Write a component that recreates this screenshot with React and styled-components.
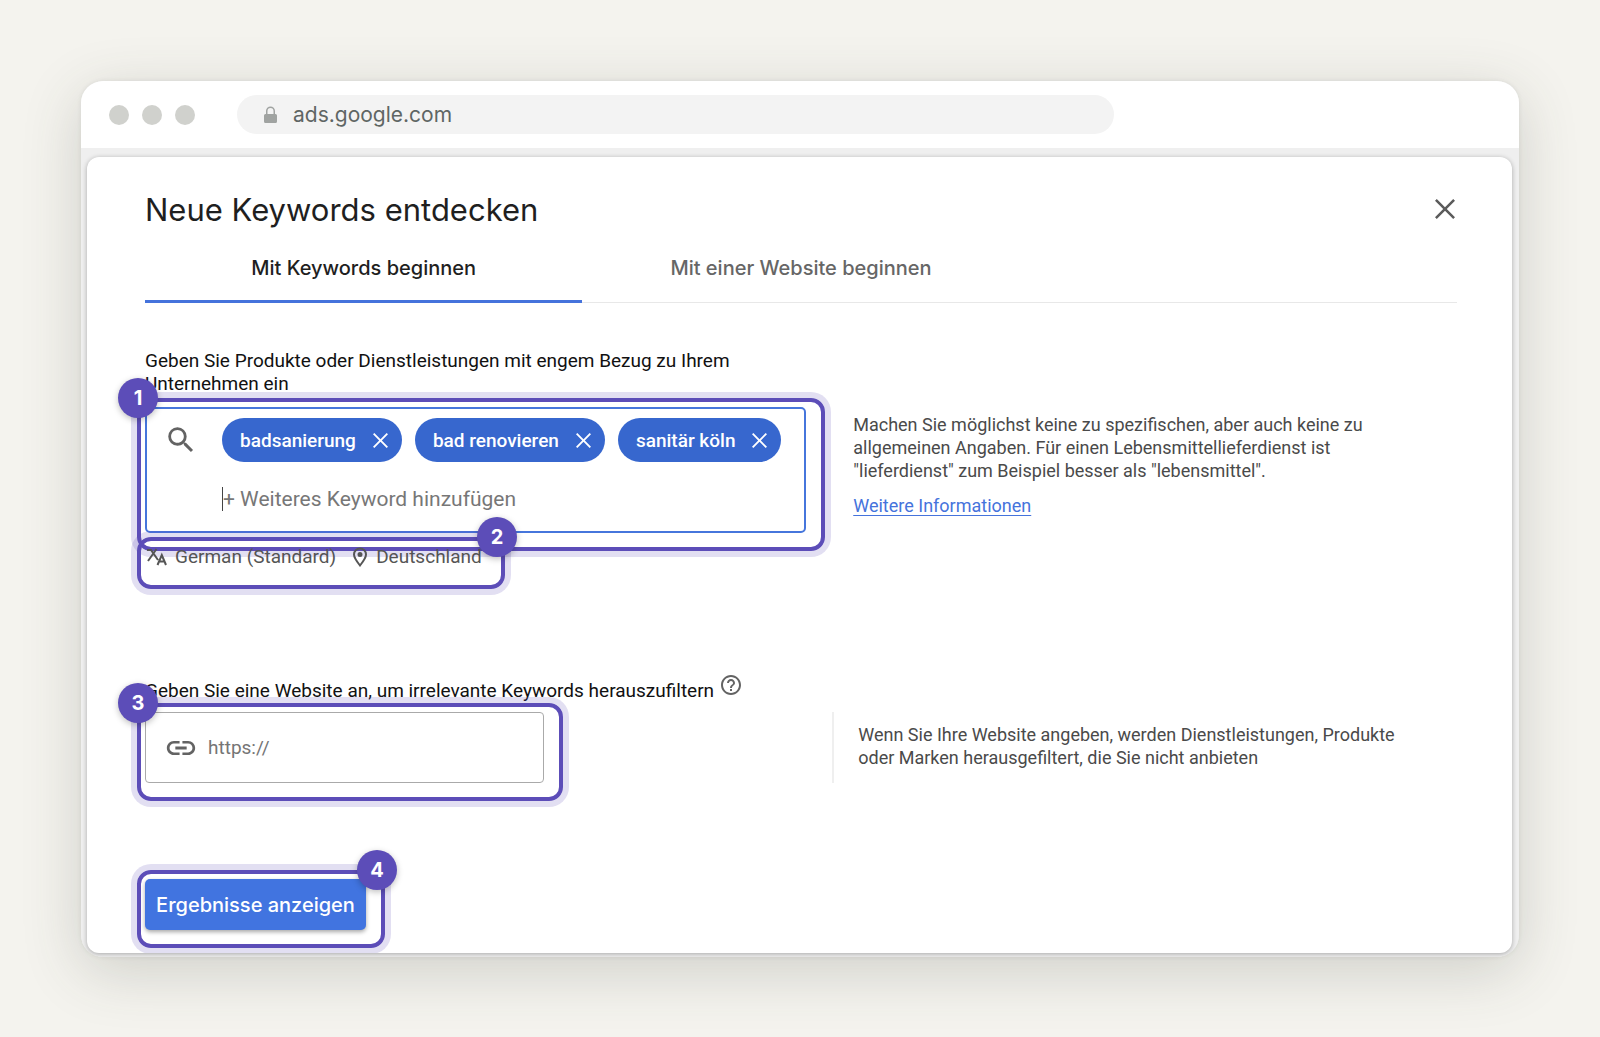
import React from "react";
import styled, { createGlobalStyle, css } from "styled-components";

const GlobalStyle = createGlobalStyle`
  * {
    box-sizing: border-box;
  }

  body {
    margin: 0;
    background: #f4f3ee;
    font-family: Roboto, "Liberation Sans", sans-serif;
    color: #1f1f1f;
  }
`;

const Page = styled.main`
  padding: 81px;
`;

const Browser = styled.div`
  overflow: hidden;
  border-radius: 22px;
  background: #ececec;
  box-shadow: 0 0 4px rgba(60, 65, 55, 0.1), 0 14px 60px rgba(60, 65, 55, 0.2);
`;

const Toolbar = styled.header`
  display: flex;
  align-items: center;
  height: 67px;
  padding: 0 28px;
  background: #fff;
`;

const Dots = styled.div`
  display: flex;
  gap: 13px;
  margin-right: 42px;
`;

const Dot = styled.span`
  width: 20px;
  height: 20px;
  border-radius: 50%;
  background: #d0d1cd;
`;

const AddressBar = styled.div`
  display: flex;
  align-items: center;
  gap: 15px;
  flex: 0 1 877px;
  height: 39px;
  padding: 0 26px;
  border-radius: 20px;
  background: #f3f3f3;
  color: #5f6664;
  font-family: Inter, "Liberation Sans", sans-serif;
  font-size: 21px;

  svg {
    fill: #a0a3a1;
  }
`;

const Viewport = styled.div`
  padding: 9px 7px 4px 6px;
  background: #efefef;
`;

const Dialog = styled.section`
  overflow: hidden;
  padding: 31px 55px 23px 58px;
  border-radius: 12px;
  background: #fff;
  box-shadow: 0 1px 5px rgba(0, 0, 0, 0.3);
`;

const DialogHeader = styled.div`
  display: flex;
  align-items: center;
  justify-content: space-between;
  height: 42px;
  margin-bottom: 8px;
  padding-right: 2px;
`;

const Title = styled.h1`
  margin: 0;
  font-family: Inter, sans-serif;
  font-size: 31px;
  font-weight: 400;
`;

const IconButton = styled.button`
  display: flex;
  padding: 0;
  border: 0;
  background: none;
  color: ${({ $color }) => $color || "inherit"};
  cursor: pointer;
`;

const Tabs = styled.div`
  display: grid;
  grid-template-columns: repeat(3, 1fr);
  border-bottom: 1px solid #e8e8e8;
`;

const Tab = styled.button`
  height: 65px;
  margin-bottom: -1px;
  padding: 0 0 3px;
  border: 0;
  border-bottom: 3px solid ${({ $active }) => ($active ? "#4573dc" : "transparent")};
  background: none;
  color: ${({ $active }) => ($active ? "#1f1f1f" : "#666")};
  font-family: Inter, sans-serif;
  font-size: 20px;
  font-weight: 500;
`;

const Row = styled.div`
  display: grid;
  grid-template-columns: 11fr 10fr;
  margin-top: ${({ $top }) => $top}px;
`;

const Column = styled.div`
  min-width: 0;
  padding-right: 26px;
`;

const Label = styled.label`
  display: block;
  color: #111;
  font-size: 19px;
  line-height: 23px;
`;

const LabelRow = styled.div`
  display: flex;
  align-items: flex-start;
  gap: 5px;

  ${Label} {
    margin-top: 6px;
  }
`;

const Marked = styled.div`
  position: relative;
  width: ${({ $width }) => $width || "auto"};
  margin-top: ${({ $top }) => $top || 0}px;
`;

const Frame = styled.div`
  position: absolute;
  inset: -9px -19px -18px -8px;
  border: 4px solid #5c4db8;
  border-radius: 14px;
  box-shadow: 0 0 0 6px rgba(92, 77, 184, 0.18);
  pointer-events: none;
`;

const Badge = styled.span`
  position: absolute;
  z-index: 1;
  top: -29px;
  ${({ $right }) =>
    $right
      ? css`
          right: -31px;
        `
      : css`
          left: -27px;
        `}
  width: 40px;
  height: 40px;
  border-radius: 50%;
  background: #5c4db8;
  box-shadow: 0 2px 6px rgba(0, 0, 0, 0.25);
  color: #fff;
  font-family: Inter, sans-serif;
  font-size: 20px;
  font-weight: 700;
  line-height: 40px;
  text-align: center;
`;

const KeywordField = styled.div`
  display: flex;
  min-height: 126px;
  padding: 9px 16px 9px 17px;
  border: 2px solid #4676dc;
  border-radius: 5px;

  > svg {
    flex: none;
    margin-top: 5px;
    fill: #636363;
  }
`;

const KeywordArea = styled.div`
  margin-left: 24px;
`;

const Chips = styled.div`
  display: flex;
  flex-wrap: wrap;
  gap: 13px;
`;

const Chip = styled.span`
  display: flex;
  align-items: center;
  gap: 17px;
  height: 44px;
  padding: 0 14px 0 18px;
  border-radius: 22px;
  background: #3767ce;
  color: #fff;
  font-size: 19px;
  font-weight: 500;
  white-space: nowrap;
`;

const KeywordInput = styled.input`
  display: block;
  width: 320px;
  height: 24px;
  margin-top: 25px;
  padding: 0;
  border: 0;
  border-left: 1px solid #444;
  outline: 0;
  background: none;
  font: 21px Roboto, sans-serif;

  &::placeholder {
    color: #777;
    opacity: 1;
  }
`;

const Targeting = styled.div`
  display: flex;
  align-items: center;
  gap: 16px;
  height: 25px;
  padding: 0 0 3px 2px;
`;

const Target = styled.button`
  display: flex;
  align-items: center;
  gap: 8px;
  padding: 0;
  border: 0;
  background: none;
  color: #555;
  font: 19px/22px Roboto, sans-serif;
  white-space: nowrap;
`;

const UrlField = styled.div`
  display: flex;
  align-items: center;
  gap: 10px;
  height: 71px;
  padding: 0 18px;
  border: 1px solid #aaa;
  border-radius: 4px;

  svg {
    flex: none;
    fill: #636363;
  }

  input {
    width: 100%;
    padding: 0;
    border: 0;
    outline: 0;
    background: none;
    font: 19px/24px Roboto, sans-serif;
  }

  input::placeholder {
    color: #757575;
    opacity: 1;
  }
`;

const Hint = styled.div`
  padding: ${({ $lined }) => ($lined ? "11px 40px 0 24px" : "6px 40px 0 21px")};
  border-left: ${({ $lined }) => ($lined ? "2px solid #efefef" : "0")};
  color: #4a4a4a;
  font-size: 18px;
  line-height: 23px;

  p {
    margin: 0 0 12px;
  }

  a {
    color: #4573dc;
    text-underline-offset: 3px;
  }
`;

const Submit = styled.button`
  display: block;
  width: 100%;
  height: 51px;
  padding: 0;
  border: 0;
  border-radius: 5px;
  background: #4174e0;
  box-shadow: 0 2px 4px rgba(0, 0, 0, 0.35);
  color: #fff;
  font-family: Inter, sans-serif;
  font-size: 20px;
  font-weight: 500;
`;

const Close = ({ size }) => (
  <svg width={size} height={size} viewBox="5 5 14 14" fill="currentColor">
    <path d="M19 6.250 17.750 5 12 10.750 6.250 5 5 6.250 10.750 12 5 17.750 6.250 19 12 13.250 17.750 19 19 17.750 13.250 12z" />
  </svg>
);

const keywords = ["badsanierung", "bad renovieren", "sanitär köln"];

const App = () => {
  return (
    <>
      <GlobalStyle />
      <Page>
        <Browser>
          <Toolbar>
            <Dots>
              <Dot />
              <Dot />
              <Dot />
            </Dots>
            <AddressBar>
              <svg width="15" height="18" viewBox="0 0 15 18">
                <path d="M3 8V5a4.500 4.500 0 0 1 9 0v3h.5A1.500 1.500 0 0 1 14 9.500v6a1.500 1.500 0 0 1-1.500 1.500h-10A1.500 1.500 0 0 1 1 15.500v-6A1.500 1.500 0 0 1 2.500 8zm1.500 0h6V5a3 3 0 0 0-6 0z" />
              </svg>
              <span>ads.google.com</span>
            </AddressBar>
          </Toolbar>
          <Viewport>
            <Dialog>
              <DialogHeader>
                <Title>Neue Keywords entdecken</Title>
                <IconButton aria-label="Schließen" $color="#5c5c5c">
                  <Close size={20} />
                </IconButton>
              </DialogHeader>
              <Tabs role="tablist">
                <Tab role="tab" aria-selected="true" $active>
                  Mit Keywords beginnen
                </Tab>
                <Tab role="tab" aria-selected="false">
                  Mit einer Website beginnen
                </Tab>
              </Tabs>

              <Row $top={46}>
                <Column>
                  <Label htmlFor="keyword">
                    Geben Sie Produkte oder Dienstleistungen mit engem Bezug zu Ihrem Unternehmen ein
                  </Label>
                </Column>
              </Row>
              <Row $top={12}>
                <Column>
                  <Marked>
                    <KeywordField>
                      <svg width="34" height="34" viewBox="0 0 24 24">
                        <path d="M15.500 14h-.79l-.28-.27A6.470 6.470 0 0 0 16 9.500 6.500 6.500 0 1 0 9.500 16c1.610 0 3.090-.59 4.230-1.570l.27.28v.79l5 4.990L20.490 19zm-6 0C7.010 14 5 11.990 5 9.500S7.010 5 9.500 5 14 7.010 14 9.500 11.990 14 9.500 14" />
                      </svg>
                      <KeywordArea>
                        <Chips>
                          {keywords.map((keyword) => (
                            <Chip key={keyword}>
                              {keyword}
                              <IconButton aria-label={`${keyword} entfernen`}>
                                <Close size={15} />
                              </IconButton>
                            </Chip>
                          ))}
                        </Chips>
                        <KeywordInput id="keyword" placeholder="+ Weiteres Keyword hinzufügen" />
                      </KeywordArea>
                    </KeywordField>
                    <Frame />
                    <Badge>1</Badge>
                  </Marked>
                  <Marked $top={13} $width="341px">
                    <Targeting>
                      <Target>
                        <svg width="20" height="18" viewBox="0 0 20 18" fill="none" stroke="currentColor" strokeWidth="2">
                          <path d="M0 2h4L11 12M1 13 9.500 1M10.500 17 14.800 7 19 17M12 13.500h6" />
                        </svg>
                        German (Standard)
                      </Target>
                      <Target>
                        <svg width="16" height="20" viewBox="0 0 16 20" fill="none" stroke="currentColor" strokeWidth="2">
                          <path d="M8 18.500C4 13.500 2 10.500 2 7.500a6 6 0 0 1 12 0c0 3-2 6-6 11z" />
                          <circle cx="8" cy="7.500" r="1.500" fill="currentColor" />
                        </svg>
                        Deutschland
                      </Target>
                    </Targeting>
                    <Frame />
                    <Badge $right>2</Badge>
                  </Marked>
                </Column>
                <Hint>
                  <p>
                    Machen Sie möglichst keine zu spezifischen, aber auch keine zu allgemeinen Angaben. Für einen
                    Lebensmittellieferdienst ist "lieferdienst" zum Beispiel besser als "lebensmittel".
                  </p>
                  <a href="#info">Weitere Informationen</a>
                </Hint>
              </Row>

              <Row $top={102}>
                <Column>
                  <LabelRow>
                    <Label htmlFor="website">Geben Sie eine Website an, um irrelevante Keywords herauszufiltern</Label>
                    <IconButton aria-label="Hilfe" $color="#636363">
                      <svg width="24" height="24" viewBox="0 0 24 24" fill="currentColor">
                        <path d="M11 18h2v-2h-2zm1-16C6.480 2 2 6.480 2 12s4.480 10 10 10 10-4.480 10-10S17.520 2 12 2m0 18c-4.410 0-8-3.590-8-8s3.590-8 8-8 8 3.590 8 8-3.590 8-8 8m0-14c-2.210 0-4 1.790-4 4h2c0-1.100.9-2 2-2s2 .9 2 2c0 2-3 1.750-3 5h2c0-2.250 3-2.500 3-5 0-2.210-1.790-4-4-4" />
                      </svg>
                    </IconButton>
                  </LabelRow>
                </Column>
              </Row>
              <Row $top={10}>
                <Column>
                  <Marked $width="399px">
                    <UrlField>
                      <svg width="34" height="34" viewBox="0 0 24 24">
                        <path d="M3.900 12c0-1.710 1.390-3.100 3.100-3.100h4V7H7c-2.760 0-5 2.240-5 5s2.240 5 5 5h4v-1.900H7c-1.710 0-3.100-1.390-3.100-3.100M8 13h8v-2H8zm9-6h-4v1.900h4c1.710 0 3.100 1.390 3.100 3.100s-1.390 3.100-3.100 3.100h-4V17h4c2.760 0 5-2.240 5-5s-2.240-5-5-5" />
                      </svg>
                      <input id="website" placeholder="https://" />
                    </UrlField>
                    <Frame />
                    <Badge>3</Badge>
                  </Marked>
                </Column>
                <Hint $lined>
                  Wenn Sie Ihre Website angeben, werden Dienstleistungen, Produkte oder Marken herausgefiltert, die Sie
                  nicht anbieten
                </Hint>
              </Row>

              <Marked $top={96} $width="221px">
                <Submit>Ergebnisse anzeigen</Submit>
                <Frame />
                <Badge $right>4</Badge>
              </Marked>
            </Dialog>
          </Viewport>
        </Browser>
      </Page>
    </>
  );
};

export default App;
